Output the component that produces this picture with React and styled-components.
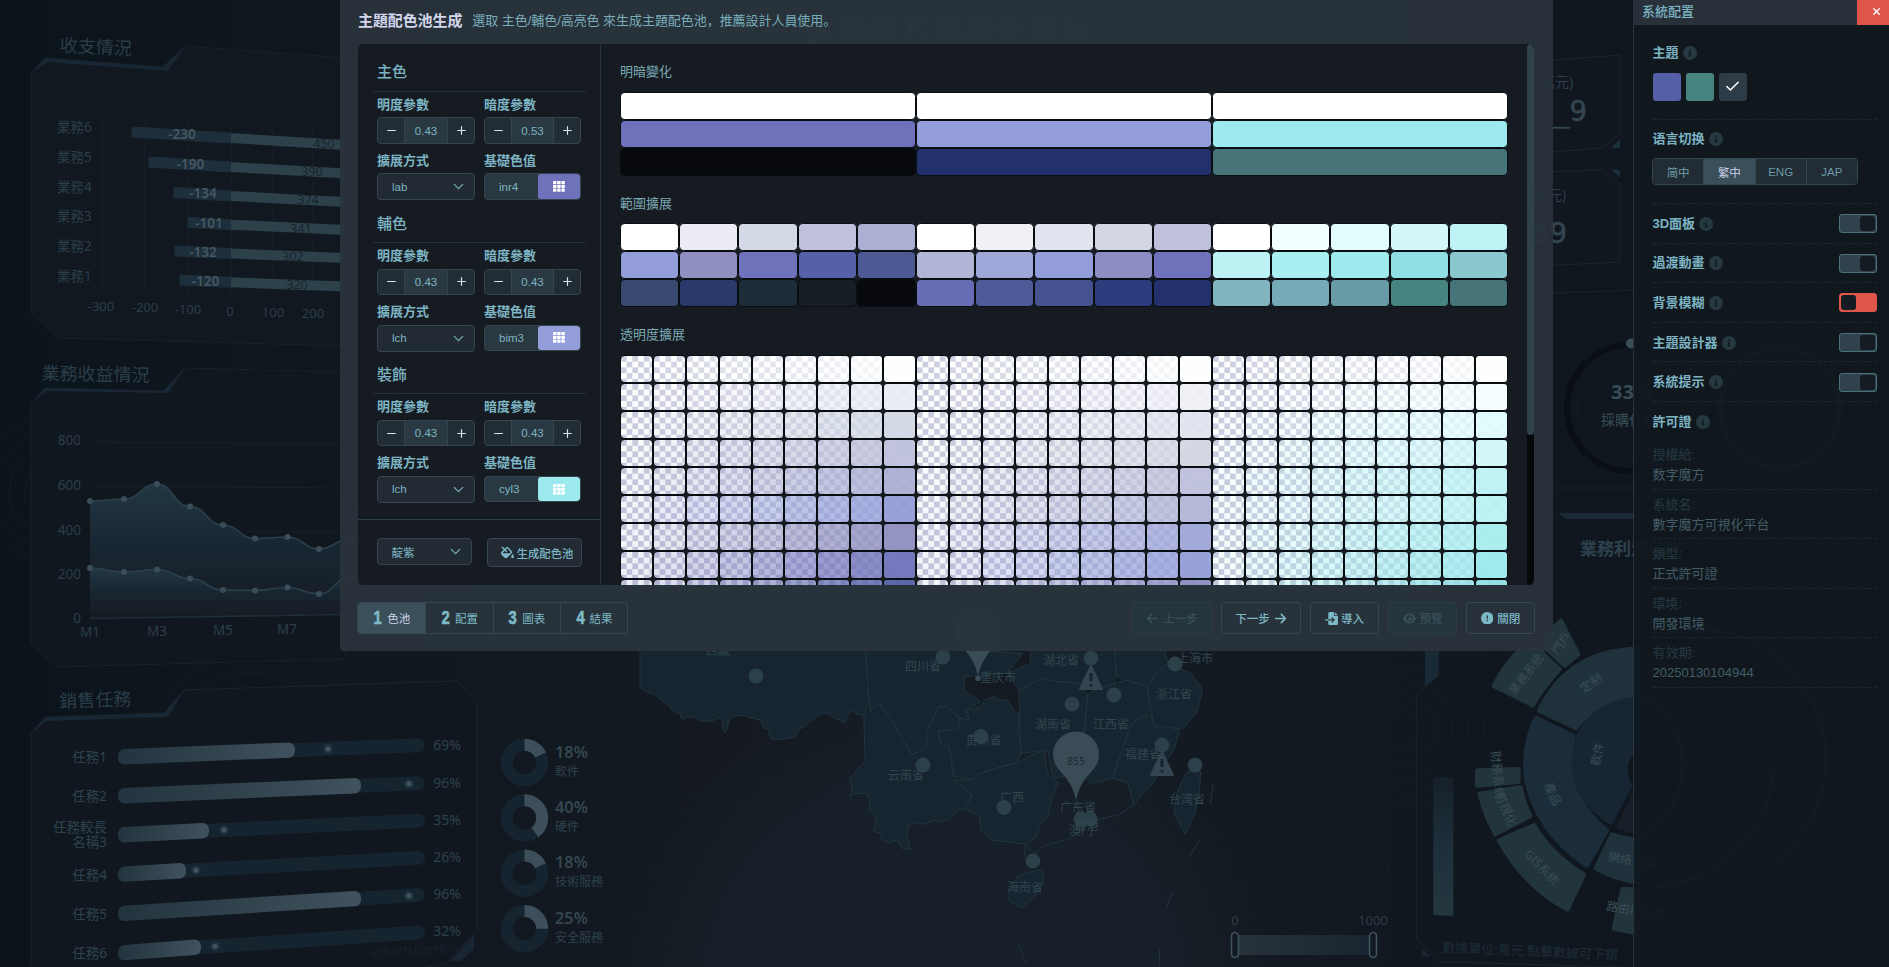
import React from 'react';
import styled, { createGlobalStyle, css } from 'styled-components';
import {
  FaArrowLeft, FaArrowRight, FaCircleExclamation, FaCircleInfo, FaEye, FaFileImport, FaFillDrip,
} from 'react-icons/fa6';
import { Check, ChevronDown, Minus, Plus, X } from 'lucide-react';

const GlobalStyle = createGlobalStyle`
  * { box-sizing: border-box; }
  html, body { margin: 0; padding: 0; background: #0c141b; overflow: hidden; }
  body { font-family: "Liberation Sans", "Noto Sans CJK SC", sans-serif; color: #7db4c3; }
`;

const Screen = styled.div`
  position: relative;
  width: 1889px;
  height: 967px;
  overflow: hidden;
  background:
    radial-gradient(ellipse 330px 330px at 945px 1010px, #171f28 0 70%, transparent 100%),
    linear-gradient(90deg, #0b131b 0, #10171f 18%, #151a21 40%, #141a21 62%, #10171e 78%, #0e151c 100%);
`;

const Canvas = styled.svg`
  position: absolute;
  inset: 0;
  width: 1889px;
  height: 967px;
  font-family: "Noto Sans", "Noto Sans CJK SC", sans-serif;
`;

/* ---------- background dashboard ---------- */

const Contours = () => {
  const groups = [
    [770, 836, 8, 78], [700, 880, 14, 90], [1296, 885, 14, 95], [1400, 730, 20, 85],
    [245, 740, 12, 90], [1098, 828, 10, 60], [60, 490, 20, 80],
  ];
  return (
    <g fill="none" stroke="#1a222a" strokeWidth="1" opacity=".6">
      {groups.map(([x, y, a, b], g) =>
        [0, 1, 2, 3, 4].map((i) => {
          const r = a + ((b - a) * i) / 4;
          return (
            <path
              key={`${g}-${i}`}
              d={`M${x - r} ${y}C${x - r} ${y - r * 0.9} ${x + r * 0.3} ${y - r * 1.3} ${x + r * 0.8} ${y - r * 0.6}S${x + r * 0.7} ${y + r} ${x} ${y + r * 0.9}S${x - r * 1.1} ${y + r * 0.5} ${x - r} ${y}Z`}
            />
          );
        }),
      )}
    </g>
  );
};

const BALANCE = [
  { n: '業務6', ly: 127, v: -230, x: 132, a: 127, b: 133, c: 140, tx: 182, ty: 134, p: 450, px: 324, py: 143 },
  { n: '業務5', ly: 157, v: -190, x: 149, a: 157, b: 162, c: 168.5, tx: 190.5, ty: 163.5, p: 390, px: 312, py: 171 },
  { n: '業務4', ly: 186.5, v: -134, x: 174, a: 187.5, b: 191, c: 197, tx: 203, ty: 193, p: 374, px: 308, py: 199 },
  { n: '業務3', ly: 216, v: -101, x: 188, a: 217.5, b: 219.7, c: 225, tx: 209, ty: 222.5, p: 341, px: 301, py: 228 },
  { n: '業務2', ly: 246, v: -132, x: 175, a: 246, b: 248.5, c: 253, tx: 203, ty: 251.5, p: 302, px: 293, py: 256 },
  { n: '業務1', ly: 275.5, v: -120, x: 180, a: 275, b: 277.3, c: 281.5, tx: 205.5, ty: 280.5, p: 320, px: 297, py: 284.5 },
];

const BalanceChart = () => (
  <g>
    <path d="M31 73L45 58L163 67L185 46L345 58V346L57 338L31 313Z" fill="#11181f" stroke="#1a2129" />
    <path d="M31 73L45 58L163 67L185 46L168 71L47 62Z" fill="#182733" />
    <text x="59.5" y="51.5" fontSize="18" fill="#2b3e49" transform="rotate(3 60 51)">收支情況</text>
    {[102, 145, 188, 231, 273, 313].map((x, i) => (
      <line key={x} x1={x} x2={x} y1={116 + i * 2} y2={293 + i * 0.8} stroke="#181f27" />
    ))}
    {BALANCE.map((r) => (
      <g key={r.n} dominantBaseline="central">
        <text x="57" y={r.ly} fontSize="13.5" fill="#2b3e49">{r.n}</text>
        <path d={`M${r.x} ${r.a}L231 ${r.b}V${r.b + 10}L${r.x} ${r.a + 10}Z`} fill="#1d2f3b" stroke="#1d2f3b" strokeWidth="1" strokeLinejoin="round" />
        <path d={`M231 ${r.b}L345 ${r.c}V${r.c + 10}L231 ${r.b + 10}Z`} fill="#2d414b" />
        <text x={r.tx} y={r.ty} fontSize="13.5" fontWeight="600" textAnchor="middle" fill="#465862">{r.v}</text>
        <text x={r.px} y={r.py} fontSize="12.5" textAnchor="middle" fill="#18242d">{r.p}</text>
      </g>
    ))}
    {[[-300, 101, 306], [-200, 145, 307], [-100, 188, 309], [0, 230, 310.5], [100, 273, 312], [200, 313, 313]].map(([t, x, y]) => (
      <text key={t} x={x} y={y} fontSize="13" textAnchor="middle" dominantBaseline="central" fill="#2b3e49">{t}</text>
    ))}
  </g>
);

const TOP_POINTS = [[90, 501], [124, 499], [157, 484], [190, 506.5], [223, 525], [255, 538.5], [287.5, 537], [319, 549], [350, 539]];
const LOW_POINTS = [[90, 568], [124, 572], [157, 569.5], [190, 578.5], [223, 590], [255, 590.5], [287.5, 587.5], [319, 594], [350, 577]];

const smooth = (pts) =>
  pts.reduce((d, [x, y], i) => {
    if (!i) return `M${x} ${y}`;
    const [px, py] = pts[i - 1];
    const mid = (px + x) / 2;
    return `${d}C${mid} ${py} ${mid} ${y} ${x} ${y}`;
  }, '');

const IncomeChart = () => (
  <g>
    <defs>
      <linearGradient id="area" x1="0" x2="0" y1="0" y2="1">
        <stop offset="0" stopColor="#223742" />
        <stop offset=".45" stopColor="#182733" />
        <stop offset="1" stopColor="#171b22" />
      </linearGradient>
    </defs>
    <path d="M31 403L45 388L163 391L185 368L345 372V659L57 667L31 644Z" fill="#10171f" stroke="#1a2129" />
    <path d="M31 403L45 388L163 391L185 368L168 393L47 391Z" fill="#182733" />
    <text x="41.5" y="379.5" fontSize="18" fill="#2b3e49" transform="rotate(1.2 41 379)">業務收益情況</text>
    {[442, 486, 530, 573].map((y) => <line key={y} x1="90" x2="345" y1={y} y2={y + 2} stroke="#1b2027" />)}
    <path d={`${smooth(TOP_POINTS)}V614L90 618Z`} fill="url(#area)" />
    <path d={`${smooth(LOW_POINTS)}V614L90 618Z`} fill="url(#area)" />
    <g fill="none" stroke="#2b404b" strokeWidth="1.6">
      <path d={smooth(TOP_POINTS)} />
      <path d={smooth(LOW_POINTS)} />
      <path d="M90 618.5L345 614.5" stroke="#1d2f3b" />
    </g>
    {[...TOP_POINTS, ...LOW_POINTS].map(([x, y]) => <circle key={`${x}${y}`} cx={x} cy={y} r="3" fill="#3a4e59" />)}
    {[['800', 81, 440], ['600', 81, 485], ['400', 81, 529.5], ['200', 81, 574], ['0', 81, 618]].map(([t, x, y]) => (
      <text key={t} x={x} y={y} fontSize="13.5" textAnchor="end" dominantBaseline="central" fill="#2b3e49">{t}</text>
    ))}
    {[['M1', 90, 632], ['M3', 157, 631], ['M5', 223, 629.5], ['M7', 287, 628.5]].map(([t, x, y]) => (
      <text key={t} x={x} y={y} fontSize="13.5" textAnchor="middle" dominantBaseline="central" fill="#2b3e49">{t}</text>
    ))}
  </g>
);

const TASKS = [
  { n: ['任務1'], l: 749, r: 737, e: 295, d: 328, p: '69%' },
  { n: ['任務2'], l: 788, r: 775, e: 361, d: 409, p: '96%' },
  { n: ['任務較長', '名稱3'], l: 827, r: 812.5, e: 209, d: 224, p: '35%' },
  { n: ['任務4'], l: 866.5, r: 849.5, e: 186, d: 196, p: '26%' },
  { n: ['任務5'], l: 905.7, r: 886.7, e: 361, d: 409, p: '96%' },
  { n: ['任務6'], l: 945, r: 924, e: 201, d: 215, p: '32%' },
];

const TaskChart = () => (
  <g>
    <defs>
      <linearGradient id="bar" x1="0" x2="1" y1="0" y2="0">
        <stop offset="0" stopColor="#22353e" />
        <stop offset="1" stopColor="#40525d" />
      </linearGradient>
    </defs>
    <path d="M31 980V733L45 717L164 713L184 690L457 681L477 702V930L445 965L300 980" fill="#10171f" stroke="#1b232c" />
    <path d="M31 733L45 717L164 713L184 690L168 717L47 721Z" fill="#182733" />
    <path d="M474 935V949L461 961H450Z" fill="#182733" />
    <text x="59.5" y="707.5" fontSize="18" fill="#2b3e49" transform="rotate(-1.5 60 707)">銷售任務</text>
    {TASKS.map((t, i) => {
      const at = (x) => t.l + 8 + ((t.r - t.l) * (x - 118)) / 307;
      return (
        <g key={i}>
          <path d={`M125 ${at(125)}L418 ${at(418)}`} stroke="#162430" strokeWidth="14" strokeLinecap="round" />
          <path
            d={`M124 ${at(124) - 7.7}L${t.e - 6} ${at(t.e) - 7.7}Q${t.e} ${at(t.e) - 7} ${t.e} ${at(t.e)}T${t.e - 6} ${at(t.e) + 7.7}L124 ${at(124) + 7.7}Q118 ${at(118) + 7} 118 ${at(118)}T124 ${at(124) - 7.7}Z`}
            fill="url(#bar)"
          />
          <circle cx={t.d} cy={at(t.d)} r="5" fill="#1d303b" />
          <circle cx={t.d} cy={at(t.d)} r="2.6" fill="#40525d" />
          {t.n.map((s, k) => (
            <text key={s} x="107" y={at(107) + (t.n.length > 1 ? k * 14.5 - 8 : 0) - 0.5} fontSize="13.5" textAnchor="end" dominantBaseline="central" fill="#2e424d">{s}</text>
          ))}
          <text x="447" y={at(447)} fontSize="14" textAnchor="middle" dominantBaseline="central" fill="#2e424d">{t.p}</text>
        </g>
      );
    })}
    <text x="371" y="957" fontSize="13" fontStyle="italic" fill="#18222b" transform="rotate(-3 371 957)">echartsBarHoriz</text>
  </g>
);

const SHARES = [[18, '軟件', 762.5], [40, '硬件', 818], [18, '技術服務', 873.3], [25, '安全服務', 928.7]];

const ShareRings = () => (
  <g dominantBaseline="central">
    {SHARES.map(([v, n, y]) => (
      <g key={n}>
        <circle cx="524.5" cy={y} r="17.7" fill="none" stroke="#162430" strokeWidth="12" />
        <circle cx="524.5" cy={y} r="17.7" fill="none" stroke="#3c4f5a" strokeWidth="12" pathLength="100" strokeDasharray={`${v} 100`} transform={`rotate(-90 524.5 ${y})`} />
        <text x="555" y={y - 11} fontSize="16.3" fontWeight="600" fill="#33474f">{v}%</text>
        <text x="555" y={y + 8.5} fontSize="12" fill="#2e424d">{n}</text>
      </g>
    ))}
  </g>
);

const PROVINCES = [
  'M0 30H590L600 180L585 225L568 222L550 210L543 228L535 248L505 232L490 220L470 222L440 250L415 270L405 290L375 298L342 298L335 268L322 262L315 240L285 232L270 226L245 228L232 240L228 268L222 278L215 262L215 235L205 234L190 242L165 245L140 232L126 230L110 238L104 222L85 212L75 195L55 180L38 162L20 158L0 142Z',
  'M590 30H850L1000 40L960 100L850 110L845 150L890 185L850 210L860 240L840 235L800 200L780 200L750 275L748 325L710 345L660 245L625 190L600 215Z',
  'M585 225L600 215L625 190L660 245L710 345L748 325L750 275L780 200L800 200L835 235L830 268L780 275L785 310L808 320L820 420L868 465L868 495L848 505L825 515L812 535L790 545L768 540L745 553L720 548L700 555L698 590L706 628L685 625L675 600L650 608L632 598L628 580L610 575L618 548L612 520L598 510L602 480L590 460L565 460L548 470L556 445L548 420L570 385L588 365Z',
  'M780 275L830 268L835 235L860 240L855 210L890 200L900 180L925 170L940 180L960 180L978 215L990 220L988 280L998 300L995 340L985 370L950 378L930 385L905 395L885 402L870 420L840 412L820 410L808 320L785 310Z',
  'M820 420L870 420L885 402L930 385L985 370L1010 352L1055 330L1065 400L1092 430L1075 480L1065 530L1045 555L1035 590L1010 612L985 610L955 605L920 600L905 585L890 570L888 530L850 505L868 465Z',
  'M960 100L1020 70L1020 30H1250L1240 130L1190 150L1150 130L1090 125L1050 115L990 150Z',
  'M990 150L1050 115L1090 125L1150 130L1170 165L1160 280L1180 330L1160 400L1080 415L1065 330L995 340Z',
  'M1170 165L1190 150L1270 120L1325 140L1335 210L1285 250L1250 360L1235 415L1180 430L1150 400L1180 330L1160 280Z',
  'M1325 140L1350 100L1380 70L1440 100L1470 150L1455 215L1420 265L1345 262L1335 210Z',
  'M1285 250L1335 220L1345 262L1380 260L1410 270L1395 330L1365 380L1340 430L1318 455L1290 495L1275 430L1235 415L1250 360Z',
  'M1240 30H1370L1380 70L1350 100L1325 140L1270 120L1245 110Z',
  'M1430 395L1465 395L1462 450L1450 520L1425 583L1395 520L1405 450Z',
  'M965 745L990 705L1050 688L1055 725L1030 770L1000 803L965 785Z',
];

const PLACES = [
  ['西藏', 717.5, 650], ['四川省', 923, 666.5], ['重庆市', 998, 677.5], ['湖北省', 1061, 660], ['上海市', 1195, 658], ['浙江省', 1174, 694.5],
  ['湖南省', 1053, 724], ['江西省', 1111, 724], ['贵州省', 983.5, 740], ['福建省', 1143, 754.5], ['云南省', 906, 775.5], ['广西', 1012, 797],
  ['广东省', 1078, 807], ['台湾省', 1187, 799.5], ['海南省', 1025, 887], ['澳门', 1081, 830], ['香港', 1087, 825],
];
const DOTS = [[756, 676], [943, 657], [1091, 658], [1175, 664], [1072, 704], [1114, 695], [981, 736.5], [923, 765], [1162, 745], [1195, 765], [1004, 807.5], [1081, 819], [1090, 819], [1033, 861]];

const MapPin = ({ x, y }) => (
  <path d={`M${x} ${y}Q${x - 3} ${y - 16} ${x - 16} ${y - 29}A23 23 0 1 1 ${x + 16} ${y - 29}Q${x + 3} ${y - 16} ${x} ${y}Z`} fill="#3a4d57" />
);

const Warning = ({ x, y }) => (
  <g>
    <path d={`M${x} ${y - 12}L${x + 11} ${y + 11}H${x - 11}Z`} fill="#33464f" stroke="#33464f" strokeWidth="2" strokeLinejoin="round" />
    <path d={`M${x} ${y - 5}V${y + 3}M${x} ${y + 6}V${y + 8.5}`} stroke="#182530" strokeWidth="3" />
  </g>
);

const RegionMap = () => (
  <g>
    <g transform="translate(640 640) scale(.3827 .3333)" fill="#172530" stroke="#20353f" strokeWidth="1">
      {PROVINCES.map((d) => <path key={d} d={d} vectorEffect="non-scaling-stroke" />)}
      <path fill="none" vectorEffect="non-scaling-stroke" d="M1005 650L1008 615L1030 640L1060 615L1120 598L1190 540L1250 525L1290 495M1498 430L1490 495M1463 598L1438 648M1392 752L1374 810M990 915L1010 975M1358 925V980" />
    </g>
    {DOTS.map(([x, y]) => <circle key={`${x}-${y}`} cx={x} cy={y} r="7.4" fill="#2c404a" />)}
    <g fontSize="12" textAnchor="middle" dominantBaseline="central" fill="#30454f">
      {PLACES.map(([n, x, y]) => <text key={n} x={x} y={y}>{n}</text>)}
    </g>
    <Warning x={1091} y={678} />
    <Warning x={1162} y={764} />
    <MapPin x={978} y={676} />
    <circle cx="978" cy="678.5" r="2.8" fill="#3a4d57" />
    <MapPin x={1076} y={800} />
    <text x="1076" y="761" fontSize="10.5" textAnchor="middle" dominantBaseline="central" fill="#1b2a33">855</text>
    <defs>
      <linearGradient id="range"><stop offset="0" stopColor="#28333c" /><stop offset="1" stopColor="#172530" /></linearGradient>
    </defs>
    <rect x="1234" y="935" width="140" height="20" fill="url(#range)" />
    {[1231.5, 1369.5].map((x) => <rect key={x} x={x} y="932.5" width="7" height="25" rx="3.5" fill="#131a21" stroke="#3f525d" strokeWidth="1.6" />)}
    <g fontSize="13" textAnchor="middle" dominantBaseline="central" fill="#2b3e49">
      <text x="1235" y="920">0</text>
      <text x="1373" y="920">1000</text>
    </g>
  </g>
);

const SunburstChart = () => (
  <g>
    <defs>
      <linearGradient id="scale" x1="0" x2="0" y1="0" y2="1">
        <stop offset="0" stopColor="#162029" /><stop offset=".5" stopColor="#1d2f3b" /><stop offset="1" stopColor="#25373f" />
      </linearGradient>
    </defs>
    <g transform="translate(1160 600) scale(.33333)" strokeLinejoin="round" strokeWidth="14">
      <path d="M2180 1125L835 1085L770 1015V280L835 228V130" fill="none" stroke="#1b252e" strokeWidth="3" />
      <path d="M795 130H835V228L795 258Z" fill="#192a36" />
      <path d="M786 1045L812 1070H786Z" fill="#182733" />
      <path d="M820 530L880 534V948L820 944Z" fill="url(#scale)" />
      <path d="M1002 258Q1040 180 1098 135L1142 155L1198 208Q1150 260 1118 315Z" fill="#22343c" stroke="#22343c" />
      <path d="M1164 100L1203 63L1254 163L1214 196L1160 145Z" fill="#22343c" stroke="#22343c" />
      <path d="M952 512L1075 508V545L952 556Z" fill="#22343c" stroke="#22343c" />
      <path d="M960 582L1082 563Q1090 610 1110 648L1006 702Q975 645 960 582Z" fill="#22343c" stroke="#22343c" />
      <path d="M1018 722L1122 676Q1170 760 1271 824L1222 928Q1090 855 1018 722Z" fill="#22343c" stroke="#22343c" />
      <path d="M1138 331Q1225 150 1435 147V292Q1315 292 1248 384Z" fill="#1f323c" stroke="#1f323c" />
      <path d="M1128 354L1240 408Q1200 575 1340 692L1280 797Q1125 690 1098 530Q1090 430 1128 354Z" fill="#1b2d3a" stroke="#1b2d3a" />
      <path d="M1356 704Q1400 718 1440 720V848Q1370 840 1308 805Z" fill="#1f323c" stroke="#1f323c" />
      <path d="M1388 868H1440V1000L1362 986Z" fill="#22343c" stroke="#22343c" />
      <path d="M1440 295Q1310 305 1257 405Q1200 570 1352 667L1410 556Q1370 490 1440 435Z" fill="#172632" stroke="#172632" />
      <path d="M1440 590L1425 580L1376 680L1440 700Z" fill="#172029" stroke="#172029" />
      <path d="M1450 120A390 390 0 0 1 1840 790M1450 285A245 245 0 0 1 1450 705M1475 860A370 370 0 0 0 1840 495" fill="none" stroke="#222a32" />
    </g>
    <g fontSize="12" textAnchor="middle" dominantBaseline="central" fill="#3a4d57">
      <text x="1526" y="674" transform="rotate(-52 1526 674)">業務系統</text>
      <text x="1561" y="643" transform="rotate(-52 1561 643)">門戶</text>
      <text x="1591" y="683" transform="rotate(-35 1591 683)">定制</text>
      <text x="1597" y="754" transform="rotate(-78 1597 754)">軟件</text>
      <text x="1553" y="794" transform="rotate(66 1553 794)">產品</text>
      <text x="1498" y="775" transform="rotate(84 1498 775)">財務系統</text>
      <text x="1506" y="809" transform="rotate(66 1506 809)">可視化</text>
      <text x="1542" y="867" transform="rotate(46 1542 867)">GIS系統</text>
      <text x="1632" y="860" transform="rotate(8 1632 860)">網絡設備</text>
      <text x="1636" y="910" transform="rotate(8 1636 910)">路由器交換</text>
    </g>
    <text x="1442" y="952" fontSize="13" fill="#1e2d37" transform="rotate(2.5 1442 952)">數據單位:萬元 點擊數據可下鑽</text>
  </g>
);

const StatCards = () => (
  <g>
    <g fill="#10171f" stroke="#1b242d">
      <path d="M1540 61L1620 55V133L1603 148L1540 153Z" />
      <path d="M1540 172L1603 170L1620 184V262L1540 266Z" />
    </g>
    <path d="M1611 148L1620 139V148ZM1611 169L1620 170V178Z" fill="#1b2f3c" />
    <g fill="#2b3e49" fontSize="14">
      <text x="1541" y="87">萬元)</text>
      <text x="1534" y="200">萬元)</text>
    </g>
    <g fill="#33464f" fontFamily="DejaVu Sans Mono, monospace" fontSize="29" stroke="#33464f" strokeWidth=".6">
      <text x="1552" y="121">_9</text>
      <text x="1532" y="243">89</text>
    </g>
    <path d="M1553 293L1640 290M1553 488H1640" stroke="#1a222a" />
    <circle cx="1630" cy="408" r="63" fill="none" stroke="#090f15" strokeWidth="6" />
    <circle cx="1630" cy="408" r="53" fill="none" stroke="#151e26" strokeWidth="1" />
    <circle cx="1780" cy="408" r="60" fill="none" stroke="#29272d" strokeWidth="6" />
    <circle cx="1631" cy="343.5" r="5" fill="#3a4d57" />
    <text x="1611" y="399" fontSize="20" fontWeight="bold" fill="#3a4d57">33%</text>
    <text x="1601" y="425" fontSize="14" fontWeight="500" fill="#33474f">採購任務</text>
    <path d="M1558 513H1640V519H1566Z" fill="#1a2a36" />
    <text x="1580" y="555" fontSize="17" fontWeight="700" fill="#2e424d">業務利潤佔比</text>
  </g>
);

const Dashboard = () => (
  <Canvas viewBox="0 0 1889 967">
    <Contours />
    <text x="803" y="43" fontSize="31" letterSpacing="1" fill="#3c5a64">數字魔方可視化平台</text>
    <BalanceChart />
    <IncomeChart />
    <TaskChart />
    <RegionMap />
    <ShareRings />
    <SunburstChart />
    <StatCards />
  </Canvas>
);

/* ---------- palette dialog ---------- */

const Dialog = styled.section`
  position: absolute;
  top: 0;
  left: 340px;
  width: 1213px;
  height: 651px;
  padding: 0 19px 0 18px;
  display: flex;
  flex-direction: column;
  background: rgba(42, 51, 59, 0.96);
  border-radius: 0 0 4px 4px;
`;

const DialogHeader = styled.header`
  height: 44px;
  padding: 0 0 3px 0;
  display: flex;
  align-items: center;
  gap: 10px;
`;

const DialogTitle = styled.h1`
  margin: 0;
  font-size: 15px;
  line-height: 20px;
  letter-spacing: -0.1px;
  font-weight: 700;
  color: #d3d6ec;
`;

const DialogHint = styled.p`
  margin: 0;
  font-size: 13px;
  line-height: 20px;
  letter-spacing: -0.05px;
  color: #79adba;
`;

const DialogBody = styled.div`
  height: 541px;
  display: flex;
  border-radius: 5px;
  overflow: hidden;
  background: #151b21;
`;

const ParamColumn = styled.aside`
  width: 243px;
  display: flex;
  flex-direction: column;
  border-right: 1px solid #27353e;
`;

const ParamList = styled.div`
  height: 476px;
  padding: 8.3px 14px 0 14.5px;
  border-bottom: 1px solid #2c3e47;
`;

const ParamSection = styled.div`
  height: 151.3px;
`;

const SectionTitle = styled.h2`
  margin: 0;
  height: 39.5px;
  padding-left: 4.5px;
  font-size: 15px;
  line-height: 40px;
  font-weight: 500;
  border-bottom: 1px solid #24313a;
`;

const FieldGrid = styled.div`
  padding: 0 4.5px;
  display: grid;
  grid-template-columns: 98px 97px;
  column-gap: 9px;
  row-gap: 4px;
`;

const FieldLabel = styled.div`
  height: 25.5px;
  font-size: 13px;
  line-height: 25.5px;
  font-weight: 600;
`;

const control = css`
  display: flex;
  align-items: center;
  font-size: 11.5px;
  border: 1px solid #33464f;
  border-radius: 4px;
  overflow: hidden;
`;

const Stepper = styled.div`
  ${control}
  height: 26.5px;
  background: #212c34;
`;

const StepButton = styled.button`
  width: 26px;
  height: 100%;
  padding: 0;
  border: 0;
  display: grid;
  place-items: center;
  background: transparent;
  color: #d5e4ee;
`;

const StepValue = styled.span`
  flex: 1;
  height: 100%;
  display: grid;
  place-items: center;
  background: #2a3941;
  border: solid #33464f;
  border-width: 0 1px;
`;

const Select = styled.div`
  ${control}
  height: 27px;
  padding: 0 7px 0 14px;
  justify-content: space-between;
  background: #222b33;
  width: ${(p) => p.$width || 'auto'};
`;

const BaseColor = styled.div`
  ${control}
  height: 26.5px;
  background: #2a3941;
`;

const BaseName = styled.span`
  flex: 1;
  padding-left: 14px;
`;

const BaseSwatch = styled.span`
  width: 42px;
  height: 100%;
  display: grid;
  place-items: center;
  border-radius: 3px;
  background: ${(p) => p.$color};
`;

const GeneratePanel = styled.div`
  flex: 1;
  padding: 18px 18px 0 18.5px;
  display: flex;
  align-items: flex-start;
  justify-content: space-between;
`;

const Button = styled.button`
  height: ${(p) => p.$height || 32}px;
  width: ${(p) => p.$width}px;
  padding: 0;
  display: flex;
  align-items: center;
  justify-content: center;
  gap: ${(p) => p.$gap ?? 4}px;
  font: 500 11.5px "Liberation Sans", "Noto Sans CJK SC", sans-serif;
  white-space: nowrap;
  color: ${(p) => (p.disabled ? '#38505a' : '#7db8c6')};
  background: ${(p) => (p.disabled ? '#25353c' : p.$filled ? '#222b33' : 'transparent')};
  border: 1px solid ${(p) => (p.disabled ? '#2b3c44' : '#344852')};
  border-radius: 4px;
`;

const GenerateButton = styled(Button)`
  padding-left: 5px;
  font-size: 11.3px;
`;

const PalettePane = styled.div`
  flex: 1;
  min-width: 0;
  padding: 8px 19px 0 19px;
  overflow: hidden;
`;

const PaletteTitle = styled.h3`
  margin: 0;
  height: ${(p) => p.$height || 47.7}px;
  padding-top: ${(p) => p.$top || 18}px;
  font-size: 13px;
  line-height: 20px;
  font-weight: 400;
  color: #7ba9b4;
`;

const SwatchGroups = styled.div`
  display: flex;
`;

const SwatchGroup = styled.div`
  flex: 1;
  display: grid;
  grid-template-columns: repeat(${(p) => p.$cols}, 1fr);
  grid-auto-rows: 28px;
`;

const Swatch = styled.span`
  border: 1px solid #080d11;
  border-radius: 4.5px;
  background-color: ${(p) => p.$color};
`;

const AlphaSwatch = styled.span`
  border: 1px solid #080d11;
  border-radius: 4.5px;
  overflow: hidden;
  display: grid;
  background: conic-gradient(#fff 25%, #c7cadb 0 50%, #fff 0 75%, #c7cadb 0) 0 0 / 11.4px 11.4px;

  &::before {
    content: '';
    background: ${(p) => p.$color};
    opacity: ${(p) => p.$alpha};
  }
`;

const ScrollTrack = styled.div`
  width: 7px;
  background: #06090c;
`;

const ScrollThumb = styled.div`
  height: 391px;
  border-radius: 4px;
  background: #31424b;
`;

const DialogFooter = styled.footer`
  flex: 1;
  padding-top: 17px;
  margin: 0 -1px;
  display: flex;
  align-items: flex-start;
  justify-content: space-between;
`;

const Steps = styled.nav`
  display: flex;
  height: 32px;
  border: 1px solid #344852;
  border-radius: 4px;
  overflow: hidden;
`;

const Step = styled.div`
  width: 67.3px;
  display: flex;
  align-items: center;
  justify-content: center;
  gap: 5px;
  font-size: 11.5px;
  color: ${(p) => (p.$active ? '#ccd2ec' : '#7db8c6')};
  background: ${(p) => (p.$active ? '#3a4f59' : 'transparent')};

  & + & { border-left: 1px solid #344852; }
`;

const StepNumber = styled.b`
  width: 9px;
  display: flex;
  justify-content: center;
  font: 700 18px "Liberation Sans", sans-serif;
  color: #7fbac8;
  -webkit-text-stroke: 0.6px #7fbac8;
  transform: scaleX(0.82);
`;

const Actions = styled.div`
  display: flex;
  gap: 9px;
`;

const GridIcon = () => (
  <svg width="12" height="11" viewBox="0 0 12 11" fill="#fff">
    {[0, 1, 2].map((r) => [0, 1, 2].map((c) => <rect key={`${r}${c}`} x={c * 4.2} y={r * 3.8} width="3.4" height="3.1" rx=".4" />))}
  </svg>
);

const SECTIONS = [
  { title: '主色', light: '0.43', dark: '0.53', mode: 'lab', base: 'inr4', color: '#6f72ba' },
  { title: '輔色', light: '0.43', dark: '0.43', mode: 'lch', base: 'bim3', color: '#939dd9' },
  { title: '裝飾', light: '0.43', dark: '0.43', mode: 'lch', base: 'cyl3', color: '#9ceaed' },
];

const TONES = [['#fff', '#6f72ba', '#06080b'], ['#fff', '#939dd9', '#22316c'], ['#fff', '#9ceaed', '#477478']];

const RANGES = [
  ['#fff', '#ebecf5', '#d3d9e5', '#bfc1dc', '#abafd4', '#939dd8', '#8f8fc0', '#6f72ba', '#5560a8', '#4c5993', '#39496f', '#28396a', '#1c2c38', '#171e26', '#07090c'],
  ['#fff', '#f0f0f7', '#e1e4ef', '#d3d7e3', '#bfc1dc', '#b2b6d6', '#9fa6d8', '#939dd9', '#8c8dc3', '#6f72ba', '#686cb5', '#4d5b98', '#46528f', '#2d3c7c', '#22316c'],
  ['#fff', '#f4ffff', '#e2fcfd', '#d2f8fa', '#bef2f5', '#bcf2f4', '#a9eef0', '#9ceaed', '#8fdfe4', '#8ac8d0', '#80b5c0', '#75aab6', '#689ba6', '#46847f', '#477478'],
];

const NumberField = ({ value }) => (
  <Stepper>
    <StepButton><Minus size={13} strokeWidth={2.2} /></StepButton>
    <StepValue>{value}</StepValue>
    <StepButton><Plus size={13} strokeWidth={2.2} /></StepButton>
  </Stepper>
);

const SelectField = ({ value, width }) => (
  <Select $width={width}>
    {value}
    <ChevronDown size={17} strokeWidth={1.6} />
  </Select>
);

const PaletteDialog = () => (
  <Dialog>
    <DialogHeader>
      <DialogTitle>主題配色池生成</DialogTitle>
      <DialogHint>選取 主色/輔色/高亮色 來生成主題配色池，推薦設計人員使用。</DialogHint>
    </DialogHeader>
    <DialogBody>
      <ParamColumn>
        <ParamList>
          {SECTIONS.map((s) => (
            <ParamSection key={s.title}>
              <SectionTitle>{s.title}</SectionTitle>
              <FieldGrid>
                <div><FieldLabel>明度參數</FieldLabel><NumberField value={s.light} /></div>
                <div><FieldLabel>暗度參數</FieldLabel><NumberField value={s.dark} /></div>
                <div><FieldLabel>擴展方式</FieldLabel><SelectField value={s.mode} /></div>
                <div>
                  <FieldLabel>基礎色值</FieldLabel>
                  <BaseColor>
                    <BaseName>{s.base}</BaseName>
                    <BaseSwatch $color={s.color}><GridIcon /></BaseSwatch>
                  </BaseColor>
                </div>
              </FieldGrid>
            </ParamSection>
          ))}
        </ParamList>
        <GeneratePanel>
          <SelectField value="靛紫" width="95px" />
          <GenerateButton $width={95} $height={29} $gap={3} $filled><FaFillDrip size={13} />生成配色池</GenerateButton>
        </GeneratePanel>
      </ParamColumn>
      <PalettePane>
        <PaletteTitle $height={39.7} $top={10}>明暗變化</PaletteTitle>
        <SwatchGroups>
          {TONES.map((colors, g) => (
            <SwatchGroup key={g} $cols={1}>{colors.map((c) => <Swatch key={c} $color={c} />)}</SwatchGroup>
          ))}
        </SwatchGroups>
        <PaletteTitle>範圍擴展</PaletteTitle>
        <SwatchGroups>
          {RANGES.map((colors, g) => (
            <SwatchGroup key={g} $cols={5}>{colors.map((c) => <Swatch key={c} $color={c} />)}</SwatchGroup>
          ))}
        </SwatchGroups>
        <PaletteTitle>透明度擴展</PaletteTitle>
        <SwatchGroups>
          {RANGES.map((colors, g) => (
            <SwatchGroup key={g} $cols={9}>
              {colors.slice(0, 10).map((c) => [1, 2, 3, 4, 5, 6, 7, 8, 9].map((a) => (
                <AlphaSwatch key={`${c}${a}`} $color={c} $alpha={a === 9 ? 0.95 : a / 10} />
              )))}
            </SwatchGroup>
          ))}
        </SwatchGroups>
      </PalettePane>
      <ScrollTrack><ScrollThumb /></ScrollTrack>
    </DialogBody>
    <DialogFooter>
      <Steps>
        {['色池', '配置', '圖表', '結果'].map((t, i) => (
          <Step key={t} $active={i === 0}><StepNumber>{i + 1}</StepNumber>{t}</Step>
        ))}
      </Steps>
      <Actions>
        <Button $width={80} disabled><FaArrowLeft size={13} />上一步</Button>
        <Button $width={80}>下一步<FaArrowRight size={13} /></Button>
        <Button $width={69} $gap={3}><FaFileImport size={13} />導入</Button>
        <Button $width={69} disabled><FaEye size={13} />預覽</Button>
        <Button $width={69}><FaCircleExclamation size={12.5} />關閉</Button>
      </Actions>
    </DialogFooter>
  </Dialog>
);

/* ---------- settings drawer ---------- */

const Drawer = styled.aside`
  position: absolute;
  top: 0;
  right: 0;
  width: 256px;
  height: 967px;
  border-left: 1px solid #27343d;
  background: rgba(17, 24, 31, 0.94);
`;

const DrawerHeader = styled.header`
  height: 25px;
  padding-left: 8px;
  display: flex;
  justify-content: space-between;
  background: #28313a;
  font-size: 13px;
  line-height: 23px;
  font-weight: 500;
`;

const CloseButton = styled.button`
  width: 32px;
  padding: 0 0 2px 7px;
  border: 0;
  display: grid;
  place-items: center;
  background: #de564a;
  color: #fff;
`;

const DrawerBody = styled.div`
  padding: 9px 12.5px 0 18.5px;
`;

const Setting = styled.div`
  height: ${(p) => p.$height}px;
  padding-top: ${(p) => p.$top || 0}px;
  border-bottom: ${(p) => (p.$plain ? '0' : '1px dashed #1d2830')};
`;

const SettingLabel = styled.div`
  display: flex;
  align-items: center;
  gap: 4px;
  font-size: 13px;
  line-height: 20px;
  font-weight: 600;

  svg { color: #263940; }
`;

const SettingRow = styled.div`
  height: 39.6px;
  padding-top: 1px;
  display: flex;
  align-items: center;
  justify-content: space-between;
  border-bottom: 1px dashed #1d2830;
`;

const ThemeList = styled.div`
  margin-top: 9.5px;
  display: flex;
  gap: 5px;
`;

const ThemeChip = styled.span`
  width: 28px;
  height: 28px;
  display: grid;
  place-items: center;
  border-radius: 3px;
  color: #fff;
  background: ${(p) => p.$color};
`;

const Segmented = styled.div`
  width: 206px;
  height: 27px;
  margin: 9px 0 0 -0.5px;
  display: flex;
  border: 1px solid #314650;
  border-radius: 4px;
  overflow: hidden;
`;

const Segment = styled.span`
  flex: 1;
  display: grid;
  place-items: center;
  font-size: 11.5px;
  color: ${(p) => (p.$active ? '#ccd2ec' : '#6d9ca9')};
  background: ${(p) => (p.$active ? '#3a4f59' : '#222c34')};

  & + & { border-left: 1px solid #314650; }
`;

const Toggle = styled.span`
  width: 38px;
  height: 19px;
  padding: 1px;
  display: flex;
  justify-content: ${(p) => (p.$off ? 'flex-start' : 'flex-end')};
  border-radius: 3px;
  border: 1px solid ${(p) => (p.$off ? '#de564a' : '#4a727a')};
  background: ${(p) => (p.$off ? '#de564a' : '#30434c')};

  &::before {
    content: '';
    width: 15px;
    height: 15px;
    border-radius: 3px;
    background: #141b22;
  }
`;

const LicenseItem = styled.div`
  height: 49.6px;
  padding-top: 5px;
  border-bottom: 1px dashed #1d2830;
  font-size: 13px;
  line-height: 20px;
`;

const LicenseKey = styled.div`
  color: #263842;
`;

const LicenseValue = styled.div`
  color: #455c67;
`;

const Label = ({ children }) => (
  <SettingLabel>{children}<FaCircleInfo size={14} /></SettingLabel>
);

const LICENSE = [
  ['授權給:', '数字魔方'], ['系統名:', '數字魔方可視化平台'], ['類型:', '正式許可證'],
  ['環境:', '開發環境'], ['有效期:', '20250130104944'],
];

const SettingsDrawer = () => (
  <Drawer>
    <DrawerHeader>
      系統配置
      <CloseButton><X size={11} strokeWidth={3} /></CloseButton>
    </DrawerHeader>
    <DrawerBody>
      <Setting $height={86} $top={9}>
        <Label>主題</Label>
        <ThemeList>
          <ThemeChip $color="#555fa8" />
          <ThemeChip $color="#46847f" />
          <ThemeChip $color="#2d3c46"><Check size={17} strokeWidth={2.2} /></ThemeChip>
        </ThemeList>
      </Setting>
      <Setting $height={84} $top={9}>
        <Label>语言切换</Label>
        <Segmented>
          {['简中', '繁中', 'ENG', 'JAP'].map((t) => <Segment key={t} $active={t === '繁中'}>{t}</Segment>)}
        </Segmented>
      </Setting>
      {['3D面板', '過渡動畫', '背景模糊', '主題設計器', '系統提示'].map((t) => (
        <SettingRow key={t}>
          <Label>{t}</Label>
          <Toggle $off={t === '背景模糊'} />
        </SettingRow>
      ))}
      <Setting $height={38} $top={10} $plain><Label>許可證</Label></Setting>
      {LICENSE.map(([k, v]) => (
        <LicenseItem key={k}>
          <LicenseKey>{k}</LicenseKey>
          <LicenseValue>{v}</LicenseValue>
        </LicenseItem>
      ))}
    </DrawerBody>
  </Drawer>
);

export default function App() {
  return (
    <>
      <GlobalStyle />
      <Screen>
        <Dashboard />
        <PaletteDialog />
        <SettingsDrawer />
      </Screen>
    </>
  );
}
